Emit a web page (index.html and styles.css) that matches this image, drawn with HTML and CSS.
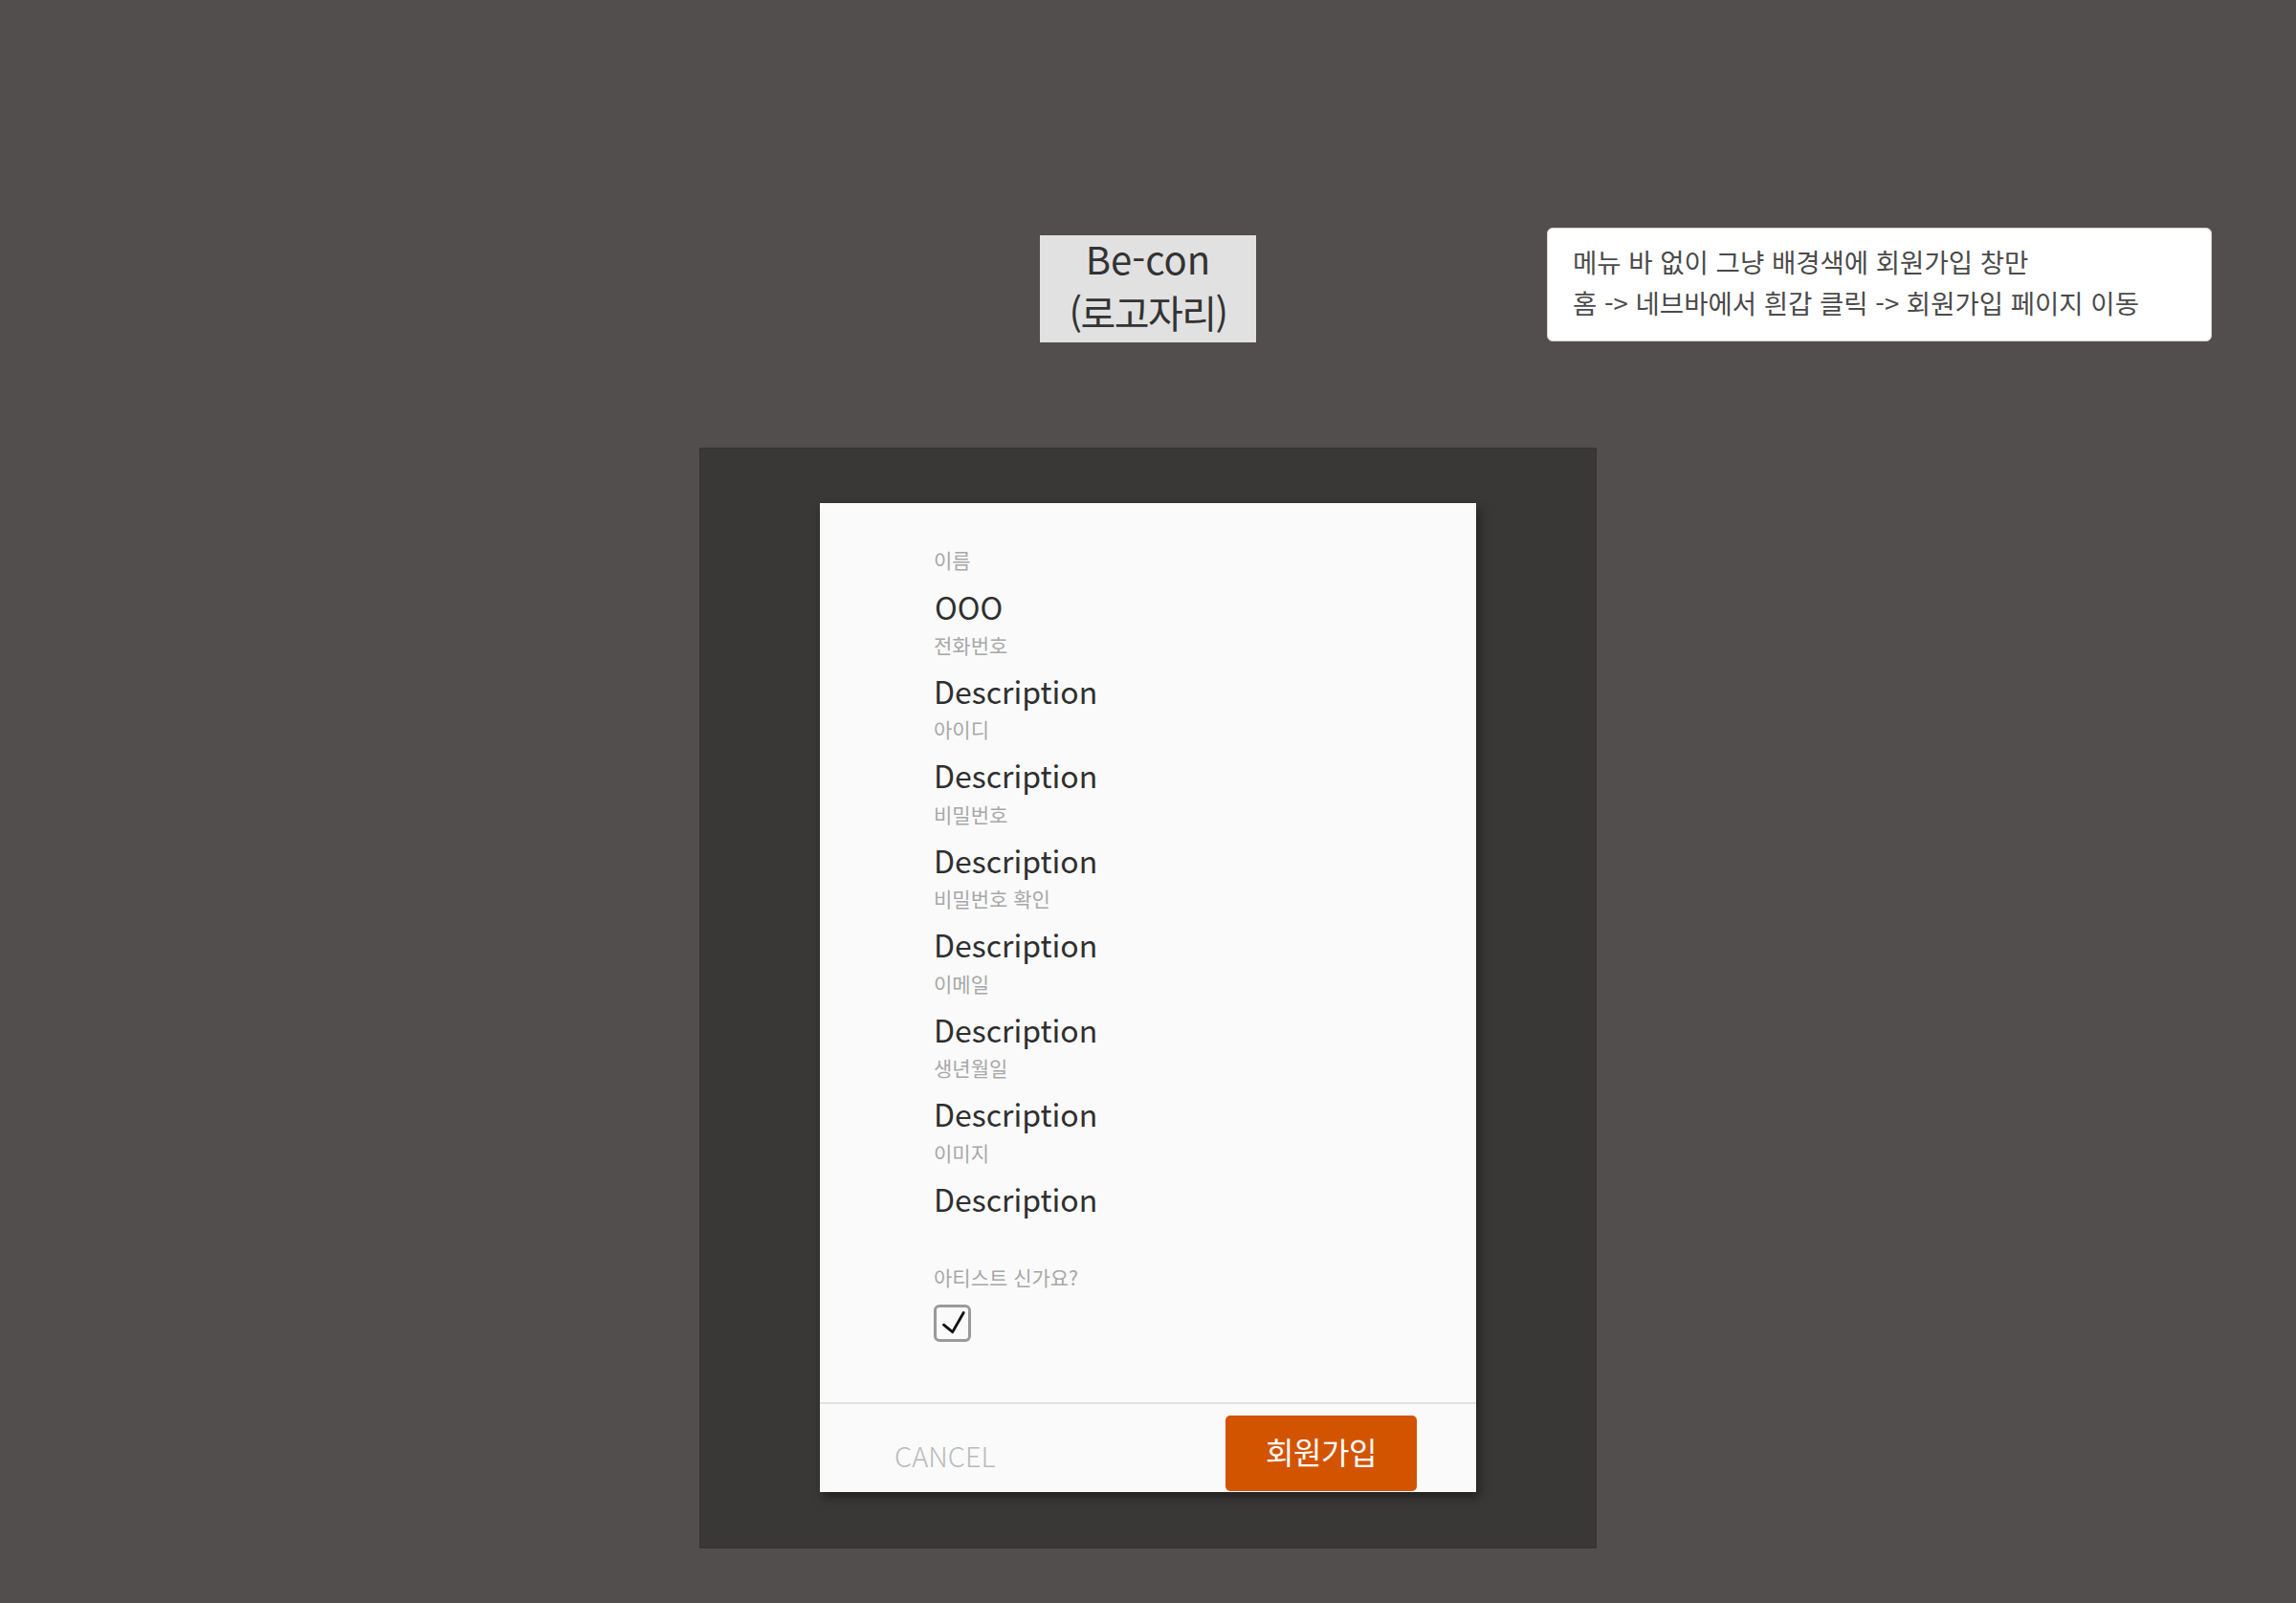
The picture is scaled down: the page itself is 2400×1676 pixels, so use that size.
FILE: index.html
```html
<!DOCTYPE html>
<html lang="ko">
<head>
<meta charset="utf-8">
<title>Be-con 회원가입</title>
<link rel="stylesheet" href="styles.css">
</head>
<body>
<main class="page">
  <header class="top">
    <div class="spacer"></div>
    <div class="logo">
      <div class="logo-name">Be-con</div>
      <div class="logo-sub">(로고자리)</div>
    </div>
    <div class="note-col">
      <div class="note">
        <p>메뉴 바 없이 그냥 배경색에 회원가입 창만</p>
        <p>홈 -&gt; 네브바에서 흰갑 클릭 -&gt; 회원가입 페이지 이동</p>
      </div>
    </div>
  </header>

  <section class="panel">
    <div class="card">
      <div class="card-body">
        <div class="fields">
          <div class="field"><div class="label">이름</div><div class="value value-first">OOO</div></div>
          <div class="field"><div class="label">전화번호</div><div class="value">Description</div></div>
          <div class="field"><div class="label">아이디</div><div class="value">Description</div></div>
          <div class="field"><div class="label">비밀번호</div><div class="value">Description</div></div>
          <div class="field"><div class="label">비밀번호 확인</div><div class="value">Description</div></div>
          <div class="field"><div class="label">이메일</div><div class="value">Description</div></div>
          <div class="field"><div class="label">생년월일</div><div class="value">Description</div></div>
          <div class="field"><div class="label">이미지</div><div class="value">Description</div></div>
        </div>
        <div class="artist">
          <div class="label">아티스트 신가요?</div>
          <div class="checkbox">
            <svg viewBox="0 0 33 33" width="33" height="33" aria-hidden="true">
              <path d="M7.5 18.2 L16.7 25.6 L28.2 5.5" fill="none" stroke="#111" stroke-width="2.9" stroke-linecap="round" stroke-linejoin="round"/>
            </svg>
          </div>
        </div>
      </div>
      <footer class="card-foot">
        <span class="cancel">CANCEL</span>
        <button class="submit" type="button">회원가입</button>
      </footer>
    </div>
  </section>
</main>
</body>
</html>
```

FILE: styles.css
```css
html, body {
  margin: 0;
  padding: 0;
}

body {
  background: #524e4d;
  width: 2400px;
  height: 1676px;
  overflow: hidden;
  font-family: "Noto Sans CJK KR", "Noto Sans", sans-serif;
}

.page {
  display: flex;
  flex-direction: column;
}

.top {
  display: grid;
  grid-template-columns: 1fr 226px 1fr;
  align-items: start;
}

.logo {
  margin-top: 246px;
  height: 112px;
  box-sizing: border-box;
  background: #e1e1e1;
  color: #333;
  text-align: center;
  font-size: 40px;
}

.logo-name {
  line-height: 48px;
}

.logo-sub {
  line-height: 64px;
  letter-spacing: -1.5px;
}

.note-col {
  display: flex;
}

.note {
  margin-top: 238px;
  margin-left: 304px;
  width: 695px;
  height: 119px;
  box-sizing: border-box;
  background: #ffffff;
  border: 1px solid #d2d2d2;
  border-radius: 6px;
  padding: 13px 0 0 26px;
  color: #4a4a4a;
  font-size: 27.5px;
  line-height: 43px;
}

.note p {
  margin: 0;
}

.panel {
  margin: 110px auto 0;
  width: 938px;
  height: 1151px;
  box-sizing: border-box;
  background: #3a3836;
  box-shadow: inset 0 0 0 1px #363432;
  padding: 58px 0 0 126px;
}

.card {
  width: 686px;
  height: 1034px;
  background: #fafafa;
  box-shadow: 3px 5px 10px rgba(0, 0, 0, 0.45);
  display: flex;
  flex-direction: column;
}

.card-body {
  flex: 1;
  padding: 44px 0 0 119px;
}

.fields {
  display: flex;
  flex-direction: column;
}

.label {
  font-size: 21px;
  line-height: 30px;
  color: #a8a8a8;
}

.value {
  font-size: 32px;
  line-height: 50.5px;
  padding-top: 8px;
  color: #2f2f2f;
}

.value-first {
  padding-top: 11px;
  line-height: 47.5px;
  padding-left: 1px;
}

.artist {
  margin-top: 42px;
  display: flex;
  flex-direction: column;
  align-items: flex-start;
}

.checkbox {
  margin-top: 14px;
  width: 39px;
  height: 39px;
  box-sizing: border-box;
  border: 3px solid #9a9a9a;
  border-radius: 6px;
  display: flex;
}

.card-foot {
  height: 94px;
  box-sizing: border-box;
  border-top: 2px solid #e2e2e2;
  display: flex;
  align-items: flex-start;
  justify-content: space-between;
  padding: 12px 62px 0 78px;
}

.cancel {
  margin-top: 19px;
  font-size: 29px;
  font-weight: 300;
  line-height: 45px;
  color: #bababa;
}

.submit {
  width: 200px;
  height: 79px;
  border: none;
  border-radius: 5px;
  background: #d35400;
  color: #ffffff;
  font-family: "Noto Sans CJK KR", "Noto Sans", sans-serif;
  font-size: 32px;
  letter-spacing: -0.5px;
  padding: 0 0 5px;
}
```
